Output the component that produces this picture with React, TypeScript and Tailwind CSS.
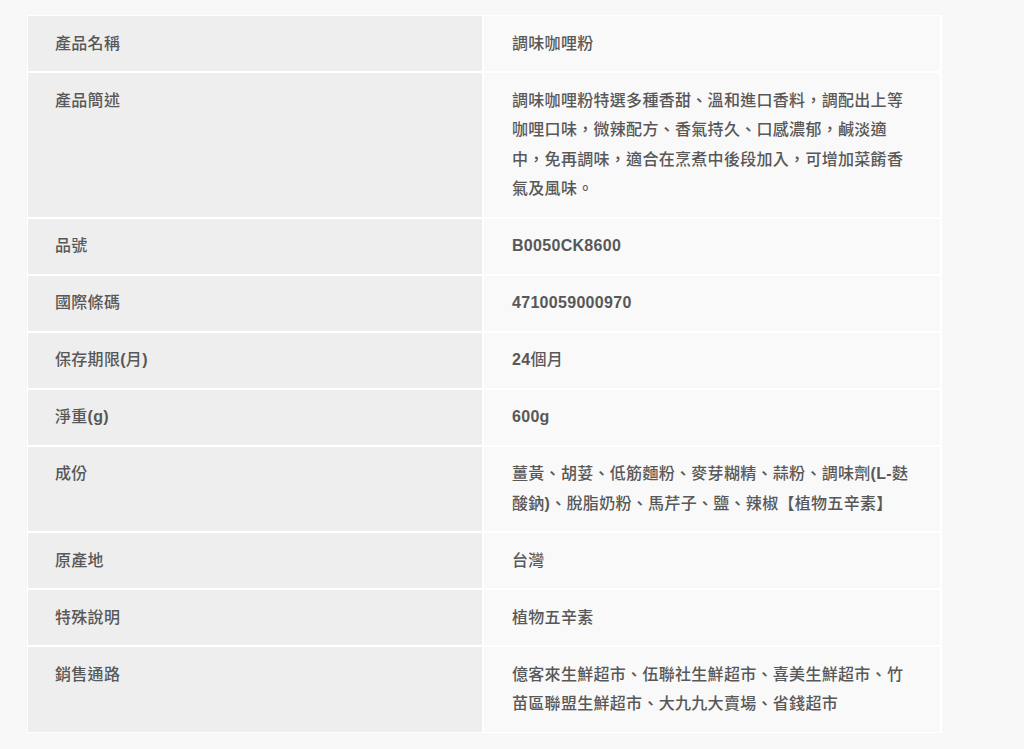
const specs: { label: string; value: string }[] = [
  { label: "產品名稱", value: "調味咖哩粉" },
  {
    label: "產品簡述",
    value:
      "調味咖哩粉特選多種香甜、溫和進口香料，調配出上等咖哩口味，微辣配方、香氣持久、口感濃郁，鹹淡適中，免再調味，適合在烹煮中後段加入，可增加菜餚香氣及風味。",
  },
  { label: "品號", value: "B0050CK8600" },
  { label: "國際條碼", value: "4710059000970" },
  { label: "保存期限(月)", value: "24個月" },
  { label: "淨重(g)", value: "600g" },
  {
    label: "成份",
    value: "薑黃、胡荽、低筋麵粉、麥芽糊精、蒜粉、調味劑(L-麩酸鈉)、脫脂奶粉、馬芹子、鹽、辣椒【植物五辛素】",
  },
  { label: "原產地", value: "台灣" },
  { label: "特殊說明", value: "植物五辛素" },
  {
    label: "銷售通路",
    value: "億客來生鮮超市、伍聯社生鮮超市、喜美生鮮超市、竹苗區聯盟生鮮超市、大九九大賣場、省錢超市",
  },
];

// latin runs render heavier than the CJK text in the original
function Mixed({ text }: { text: string }) {
  const parts = text.split(/([\x20-\x7e]+)/);
  return (
    <>
      {parts.map((p, i) =>
        /^[\x20-\x7e]+$/.test(p) ? (
          <span key={i} className="font-bold">
            {p}
          </span>
        ) : (
          p
        )
      )}
    </>
  );
}

export default function App() {
  return (
    <div className="h-[749px] w-full overflow-hidden bg-[#f8f8f8] pt-[15px] pl-[27px] font-['Liberation_Sans','Noto_Sans_CJK_TC',sans-serif] text-[16px] leading-[29.5px] tracking-[0.3px] font-medium text-[#585858]">
      {/* spec table */}
      <div className="grid w-[915px] grid-cols-[454px_456px] gap-[2px] border border-white bg-white pr-[1px]">
        {specs.map((row) => (
          <div key={row.label} className="contents">
            <div className="bg-[#eeeeee] px-[27px] py-[12.75px]">
              <Mixed text={row.label} />
            </div>
            <div className="bg-[#f9f9f9] pl-[28px] pr-[28px] py-[12.75px]">
              <Mixed text={row.value} />
            </div>
          </div>
        ))}
      </div>
    </div>
  );
}
